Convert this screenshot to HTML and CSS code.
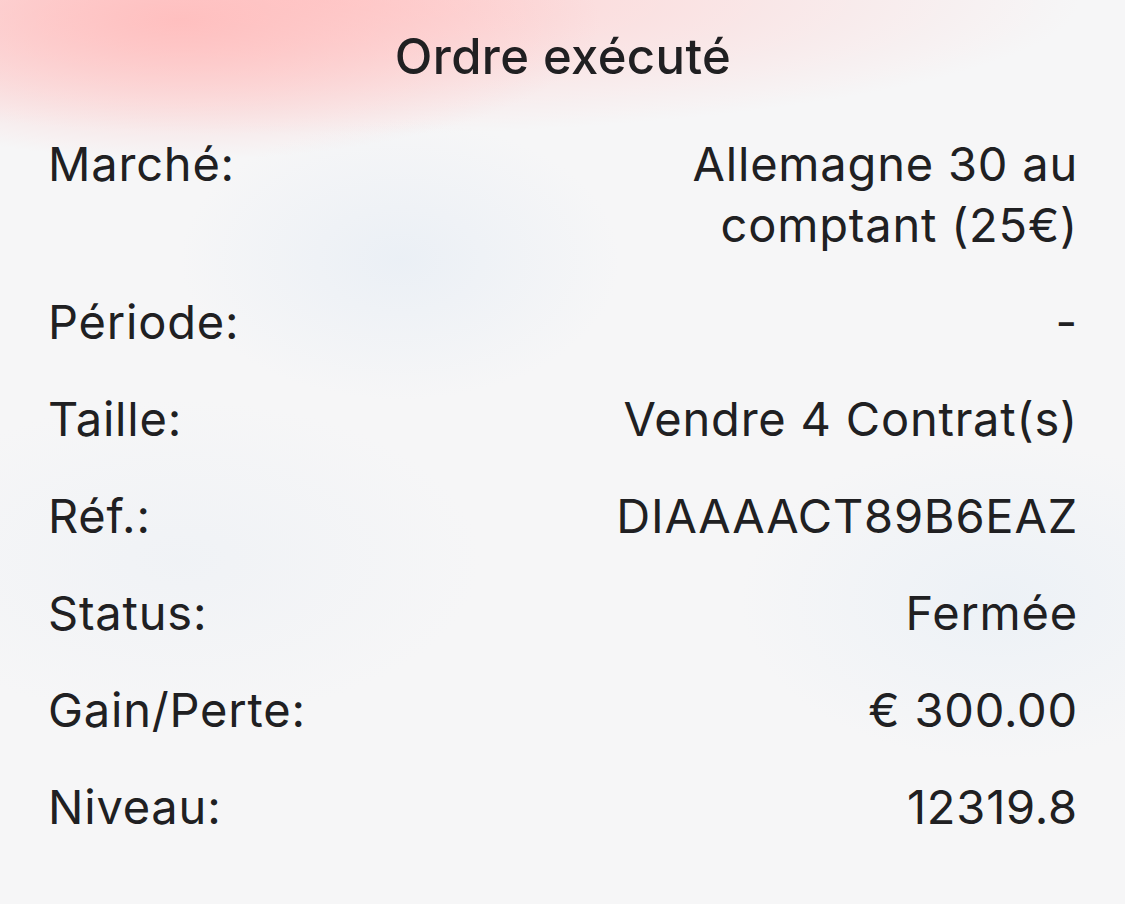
FILE: index.html
```html
<!DOCTYPE html>
<html lang="fr">
<head>
<meta charset="utf-8">
<link rel="stylesheet" href="styles.css">
</head>
<body>
<div class="sheet">
  <h1 class="title">Ordre exécuté</h1>
  <div class="rows">
    <div class="row"><span class="label">Marché:</span><span class="value">Allemagne 30 au<br>comptant (25€)</span></div>
    <div class="row"><span class="label">Période:</span><span class="value">-</span></div>
    <div class="row"><span class="label">Taille:</span><span class="value">Vendre 4 Contrat(s)</span></div>
    <div class="row"><span class="label">Réf.:</span><span class="value">DIAAAACT89B6EAZ</span></div>
    <div class="row"><span class="label">Status:</span><span class="value">Fermée</span></div>
    <div class="row"><span class="label">Gain/Perte:</span><span class="value">€ 300.00</span></div>
    <div class="row"><span class="label">Niveau:</span><span class="value">12319.8</span></div>
  </div>
</div>
</body>
</html>
```
FILE: styles.css
```css
html, body {
  margin: 0;
  padding: 0;
}
body {
  width: 1125px;
  height: 904px;
  overflow: hidden;
  font-family: Inter, "Noto Sans", sans-serif;
  color: #202022;
  background-color: #f6f6f7;
  background-image:
    radial-gradient(ellipse 420px 140px at 180px 20px, rgba(255, 190, 190, 0.95), rgba(255, 200, 200, 0) 100%),
    radial-gradient(ellipse 760px 135px at 320px 0px, rgba(255, 205, 205, 0.9), rgba(255, 215, 215, 0) 100%),
    radial-gradient(ellipse 220px 140px at 400px 260px, rgba(232, 238, 245, 0.8), rgba(232, 238, 245, 0) 100%),
    radial-gradient(ellipse 260px 160px at 1000px 600px, rgba(234, 240, 246, 0.8), rgba(234, 240, 246, 0) 100%),
    radial-gradient(ellipse 300px 160px at 180px 560px, rgba(236, 240, 245, 0.6), rgba(236, 240, 245, 0) 100%);
}
.sheet {
  padding: 27px 47px 0 48px;
}
.title {
  margin: 0;
  text-align: center;
  font-size: 49px;
  line-height: 60px;
  font-weight: 500;
  letter-spacing: 0.4px;
}
.rows {
  margin-top: 46px;
  display: flex;
  flex-direction: column;
  gap: 36px;
}
.row {
  display: flex;
  justify-content: space-between;
  align-items: flex-start;
  font-size: 47px;
  line-height: 61px;
  letter-spacing: 0.8px;
}
.value {
  text-align: right;
}
```
